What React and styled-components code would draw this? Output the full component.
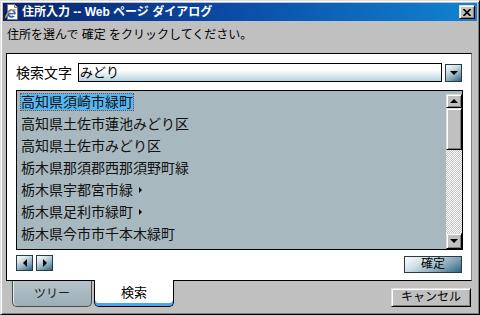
import React from 'react';
import styled, { createGlobalStyle, css } from 'styled-components';

const Global = createGlobalStyle`
  html, body { margin: 0; padding: 0; background: #c0c0c0; }
  body {
    width: 480px; height: 315px; overflow: hidden;
    font-family: "Liberation Sans", "Noto Sans CJK JP", sans-serif;
    color: #000;
  }
  * { box-sizing: border-box; }
`;

const bevel = css`
  background: #c0c0c0;
  border: 1px solid;
  border-color: #dfdfdf #000 #000 #dfdfdf;
  box-shadow: inset 1px 1px #fff, inset -1px -1px #808080;
`;

const tealGrad = css`
  border: 1px solid #2a3a42;
  background: linear-gradient(150deg, #fbfdfe 0%, #d3e1e8 30%, #7fa2b3 70%, #2e6580 100%);
`;

const Window = styled.div`
  width: 480px;
  height: 315px;
  background: #c0c0c0;
  border: 1px solid;
  border-color: #dfdfdf #000 #000 #dfdfdf;
  box-shadow: inset 1px 1px #fff, inset -1px -1px #808080;
  padding: 2px;
  display: flex;
  flex-direction: column;
`;

const TitleBar = styled.div`
  height: 18px;
  flex: none;
  display: flex;
  align-items: center;
  padding: 0 2px 0 1px;
  background: linear-gradient(to right, #0a246a 0%, #0a48a4 45%, #1084d0 100%);
`;

const TitleText = styled.span`
  margin-left: 2px;
  color: #fff;
  font-weight: bold;
  font-size: 12px;
  line-height: 16px;
  white-space: pre;
`;

const CloseBtn = styled.div`
  ${bevel};
  margin-left: auto;
  width: 16px;
  height: 14px;
  display: flex;
  align-items: center;
  justify-content: center;
`;

const Instruction = styled.div`
  height: 32px;
  flex: none;
  display: flex;
  align-items: center;
  padding: 0 0 4px 4px;
  font-size: 12px;
  line-height: 16px;
  white-space: pre;
`;

const Panel = styled.div`
  height: 228px;
  flex: none;
  margin: 0 5px 0 3px;
  background: #fff;
  border: 1px solid #000;
  border-right-color: #808080;
  padding: 9px 8px 0 9px;
  display: flex;
  flex-direction: column;
`;

const SearchRow = styled.div`
  display: flex;
  align-items: center;
  height: 19px;
`;

const Label = styled.span`
  font-size: 14px;
  line-height: 18px;
  margin-right: 6px;
  white-space: nowrap;
`;

const Input = styled.div`
  flex: 1;
  height: 19px;
  border: 1px solid #000;
  background: linear-gradient(to bottom, #ffffff 35%, #b6d2df 100%);
  font-size: 13px;
  line-height: 17px;
  padding-left: 1px;
`;

const DropBtn = styled.div`
  ${tealGrad};
  width: 17px;
  height: 18px;
  margin: 0 1px 0 3px;
  display: flex;
  align-items: center;
  justify-content: center;
`;

const Tri = styled.span`
  width: 0;
  height: 0;
  border-style: solid;
  border-color: transparent;
  ${p => p.dir === 'down' && css`
    border-width: 4px 4px 0 4px;
    border-top-color: #000;
  `}
  ${p => p.dir === 'up' && css`
    border-width: 0 4px 4px 4px;
    border-bottom-color: #000;
  `}
  ${p => p.dir === 'left' && css`
    border-width: 4px 4px 4px 0;
    border-right-color: #000;
  `}
  ${p => p.dir === 'right' && css`
    border-width: 4px 0 4px 4px;
    border-left-color: #000;
  `}
`;

const List = styled.div`
  margin-top: 8px;
  height: 160px;
  flex: none;
  border: 1px solid #000;
  background: #a7b8be;
  display: flex;
`;

const Items = styled.div`
  flex: 1;
  padding-left: 3px;
  display: flex;
  flex-direction: column;
`;

const Row = styled.div`
  height: 22px;
  display: flex;
  align-items: center;
`;

const ItemText = styled.span`
  font-size: 14px;
  line-height: 16px;
  height: 18px;
  border: 1px dotted transparent;
  white-space: nowrap;
  color: #111;
  ${p => p.$selected && css`
    background: #55b8f3;
    border-color: #a0401c;
  `}
`;

const SubArrow = styled.span`
  margin-left: 5px;
  width: 0;
  height: 0;
  border-style: solid;
  border-color: transparent transparent transparent #000;
  border-width: 3px 0 3px 3px;
`;

const ScrollBar = styled.div`
  width: 16px;
  flex: none;
  margin-top: 3px;
  display: flex;
  flex-direction: column;
`;

const ScrollBtn = styled.div`
  ${bevel};
  height: ${p => p.$h}px;
  flex: none;
  display: flex;
  align-items: center;
  justify-content: center;
`;

const Thumb = styled.div`
  ${bevel};
  height: 42px;
  flex: none;
`;

const Track = styled.div`
  flex: 1;
  background-color: #fff;
  background-image: conic-gradient(#c0c0c0 25%, #fff 0 50%, #c0c0c0 0 75%, #fff 0);
  background-size: 2px 2px;
`;

const BottomRow = styled.div`
  margin-top: 5px;
  display: flex;
  align-items: flex-start;
`;

const NavBtn = styled.div`
  ${tealGrad};
  width: 17px;
  height: 16px;
  margin-right: 3px;
  display: flex;
  align-items: center;
  justify-content: center;
`;

const ConfirmBtn = styled.div`
  ${tealGrad};
  margin: 1px 1px 0 auto;
  width: 58px;
  height: 17px;
  font-size: 12px;
  line-height: 15px;
  text-align: center;
`;

const BottomBar = styled.div`
  flex: 1;
  display: flex;
  align-items: flex-start;
  padding: 0 6px 0 9px;
`;

const Tab = styled.div`
  width: 80px;
  display: flex;
  align-items: center;
  justify-content: center;
  border-radius: 0 0 5px 5px;
  ${p => p.$active ? css`
    position: relative;
    margin: -1px 0 0 2px;
    height: 27px;
    background: #fff;
    border: 1px solid #000;
    border-top: none;
    box-shadow: inset 0 -3px 0 #4ba6ee;
    font-size: 13px;
    padding-bottom: 3px;
  ` : css`
    height: 26px;
    background: linear-gradient(to bottom, #b3c3c9, #9cafb6);
    border: 1px solid #4a4a4a;
    border-top: none;
    box-shadow: inset 1px 0 #e4ecef;
    font-size: 12px;
    color: #1a1a1a;
    padding-bottom: 2px;
  `}
`;

const CancelBtn = styled.div`
  ${bevel};
  margin: 7px 0 0 auto;
  width: 80px;
  height: 19px;
  font-size: 12px;
  line-height: 17px;
  text-align: center;
`;

const IeIcon = () => (
  <svg width="16" height="16" viewBox="0 0 16 16">
    <path d="M3.5 0.5h7l3 3v12h-10z" fill="#fff" stroke="#7a7a7a" />
    <path d="M10.5 0.5v3h3" fill="#e0e0e0" stroke="#7a7a7a" />
    <circle cx="7.5" cy="9.5" r="3.3" fill="none" stroke="#1d5fd6" strokeWidth="1.8" />
    <rect x="4.5" y="9" width="6" height="1.4" fill="#1d5fd6" />
    <rect x="9" y="10.4" width="3" height="1.6" fill="#fff" />
    <path d="M1.5 14 C2.5 8, 9 4.5, 12.5 6" fill="none" stroke="#e8a818" strokeWidth="1.2" />
  </svg>
);

const CloseX = () => (
  <svg width="8" height="7" viewBox="0 0 8 7">
    <path d="M0.5 0 L7.5 7 M7.5 0 L0.5 7" stroke="#000" strokeWidth="1.6" />
  </svg>
);

const items = [
  { t: '高知県須崎市緑町', sel: true },
  { t: '高知県土佐市蓮池みどり区' },
  { t: '高知県土佐市みどり区' },
  { t: '栃木県那須郡西那須野町緑' },
  { t: '栃木県宇都宮市緑', sub: true },
  { t: '栃木県足利市緑町', sub: true },
  { t: '栃木県今市市千本木緑町' },
];

export default function App() {
  return (
    <>
      <Global />
      <Window>
        <TitleBar>
          <IeIcon />
          <TitleText>住所入力 -- Web ページ ダイアログ</TitleText>
          <CloseBtn><CloseX /></CloseBtn>
        </TitleBar>
        <Instruction>住所を選んで 確定 をクリックしてください。</Instruction>
        <Panel>
          <SearchRow>
            <Label>検索文字</Label>
            <Input>みどり</Input>
            <DropBtn><Tri dir="down" /></DropBtn>
          </SearchRow>
          <List>
            <Items>
              {items.map(it => (
                <Row key={it.t}>
                  <ItemText $selected={it.sel}>{it.t}</ItemText>
                  {it.sub && <SubArrow />}
                </Row>
              ))}
            </Items>
            <ScrollBar>
              <ScrollBtn $h={14}><Tri dir="up" /></ScrollBtn>
              <Thumb />
              <Track />
              <ScrollBtn $h={16}><Tri dir="down" /></ScrollBtn>
            </ScrollBar>
          </List>
          <BottomRow>
            <NavBtn><Tri dir="left" /></NavBtn>
            <NavBtn><Tri dir="right" /></NavBtn>
            <ConfirmBtn>確定</ConfirmBtn>
          </BottomRow>
        </Panel>
        <BottomBar>
          <Tab>ツリー</Tab>
          <Tab $active>検索</Tab>
          <CancelBtn>キャンセル</CancelBtn>
        </BottomBar>
      </Window>
    </>
  );
}
